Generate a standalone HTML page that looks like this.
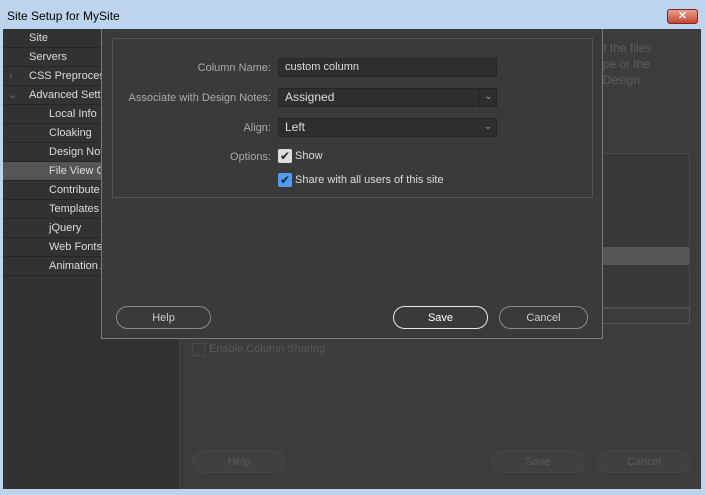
<!DOCTYPE html>
<html><head><style>
*{box-sizing:border-box;margin:0;padding:0}
body{width:705px;height:495px;background:#bdd4ee;font-family:"Liberation Sans",sans-serif;font-size:11px;position:relative;overflow:hidden}
.a{position:absolute}
.title{left:7px;top:9px;font-size:12px;color:#000}
.close{left:667px;top:9px;width:31px;height:15px;border-radius:3px;background:linear-gradient(#e8a090,#c8452f);border:1px solid #7a2a20;color:#fff;font-size:11px;font-weight:bold;text-align:center;line-height:13px}
.main{left:3px;top:29px;width:698px;height:460px;background:#3c3c3c}
.side{left:3px;top:29px;width:177px;height:460px;background:#323232;border-right:1px solid #444}
.row{position:absolute;left:0;width:177px;height:19px;border-bottom:1px solid #262626;color:#ddd;line-height:18px;font-size:11px}
.dim{color:#5a5a5a}
.btn{position:absolute;height:23px;border:1px solid #8a8a8a;border-radius:12px;color:#ccc;text-align:center;line-height:23px;font-size:11px}
.lbl{position:absolute;right:434px;color:#aaa;font-size:11px}
.inp{position:absolute;left:278px;width:219px;height:19px;background:#2e2e2e;border:1px solid #262626;color:#ddd;padding-left:6px;line-height:17px}
.cb{position:absolute;width:14px;height:14px;border-radius:2px}
</style></head><body>
<div class="a title">Site Setup for MySite</div>
<div class="a close">✕</div>
<div class="a main"></div>
<div class="a side">
<div class="row" style="top:0;padding-left:26px">Site</div>
<div class="row" style="top:19px;padding-left:26px">Servers</div>
<div class="row" style="top:38px;padding-left:26px"><span class="a" style="left:6px;color:#666">›</span>CSS Preprocessors</div>
<div class="row" style="top:57px;padding-left:26px"><span class="a" style="left:5px;color:#666">⌄</span>Advanced Settings</div>
<div class="row" style="top:76px;padding-left:46px">Local Info</div>
<div class="row" style="top:95px;padding-left:46px">Cloaking</div>
<div class="row" style="top:114px;padding-left:46px">Design Notes</div>
<div class="row" style="top:133px;padding-left:46px;background:#555">File View Columns</div>
<div class="row" style="top:152px;padding-left:46px">Contribute</div>
<div class="row" style="top:171px;padding-left:46px">Templates</div>
<div class="row" style="top:190px;padding-left:46px">jQuery</div>
<div class="row" style="top:209px;padding-left:46px">Web Fonts</div>
<div class="row" style="top:228px;padding-left:46px">Animation Assets</div>
</div>
<div class="a dim" style="left:590px;top:40px;font-size:12px;line-height:16px;color:#5e5e5e">out the files<br>Type or the<br>in Design</div>
<div class="a" style="left:602px;top:153px;width:88px;height:156px;background:#383838;border:1px solid #4a4a4a"></div>
<div class="a" style="left:602px;top:247px;width:87px;height:18px;background:#565656"></div>
<div class="a" style="left:602px;top:307px;width:88px;height:17px;border:1px solid #555"></div>
<div class="a" style="left:192px;top:343px;width:13px;height:13px;border:1px solid #4a4a4a"></div>
<div class="a" style="left:209px;top:343px;color:#5a5a5a">Enable Column Sharing</div>
<div class="btn" style="left:192px;top:450px;width:94px;border-color:#444;background:#404040;color:#5a5a5a">Help</div>
<div class="btn" style="left:491px;top:450px;width:94px;border-color:#444;background:#404040;color:#5a5a5a">Save</div>
<div class="btn" style="left:597px;top:450px;width:94px;border-color:#444;background:#404040;color:#5a5a5a">Cancel</div>

<div class="a" style="left:101px;top:29px;width:502px;height:310px;background:#3a3a3a;border:1px solid #7a7a7a;border-top:none"></div>
<div class="a" style="left:112px;top:38px;width:481px;height:160px;border:1px solid #555"></div>
<div class="lbl" style="top:62px">Column Name:</div>
<div class="inp" style="top:58px">custom column</div>
<div class="lbl" style="top:92px">Associate with Design Notes:</div>
<div class="inp" style="top:88px;font-size:12px">Assigned<span class="a" style="left:200px;top:-1px;width:18px;height:19px;border-left:1px solid #262626;color:#999;text-align:center;font-size:10px">⌄</span></div>
<div class="lbl" style="top:122px">Align:</div>
<div class="inp" style="top:118px;font-size:12px">Left<span class="a" style="left:200px;top:-1px;width:18px;color:#999;text-align:center;font-size:10px">⌄</span></div>
<div class="lbl" style="top:151px">Options:</div>
<div class="cb" style="left:278px;top:149px;background:#ddd;color:#222;font-size:12px;line-height:14px;text-align:center">✔</div>
<div class="a" style="left:295px;top:150px;color:#ddd">Show</div>
<div class="cb" style="left:278px;top:173px;background:#4a9ff0;color:#123;font-size:12px;line-height:14px;text-align:center">✔</div>
<div class="a" style="left:295px;top:174px;color:#ddd">Share with all users of this site</div>
<div class="btn" style="left:116px;top:306px;width:95px">Help</div>
<div class="btn" style="left:393px;top:306px;width:95px;border:1px solid #e8e8e8;color:#fff">Save</div>
<div class="btn" style="left:499px;top:306px;width:89px">Cancel</div>
</body></html>
